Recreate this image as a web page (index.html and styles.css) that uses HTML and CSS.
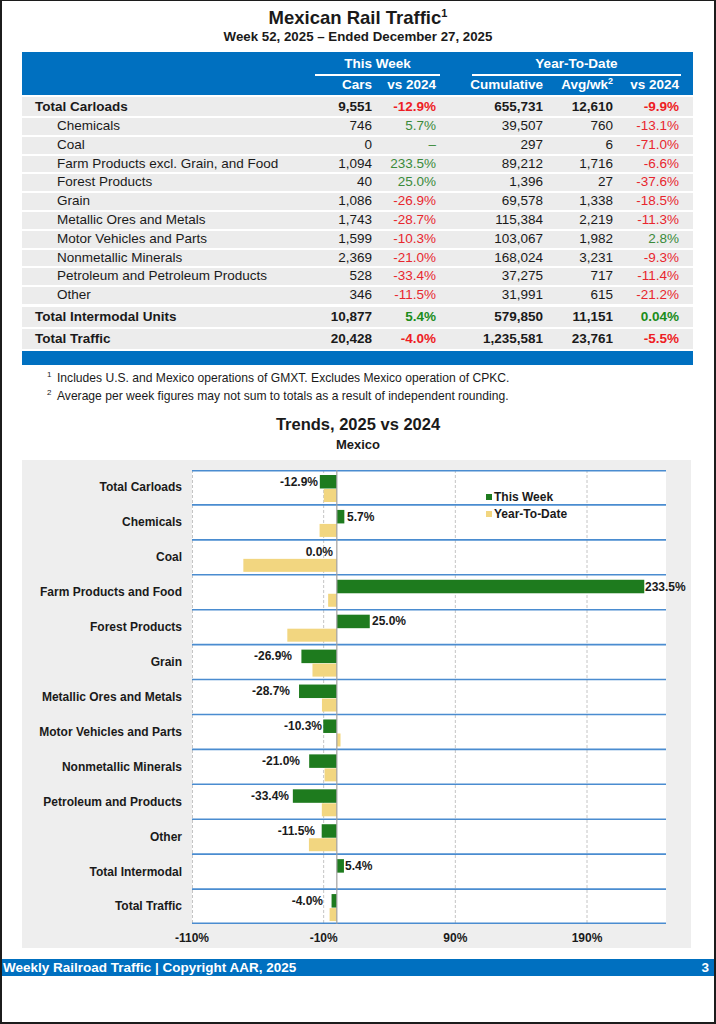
FILE: index.html
```html
<!DOCTYPE html>
<html>
<head>
<meta charset="utf-8">
<link rel="stylesheet" href="styles.css">
</head>
<body>
<div class="page">
  <h1 class="title">Mexican Rail Traffic<sup>1</sup></h1>
  <div class="subtitle">Week 52, 2025 – Ended December 27, 2025</div>

  <div class="table">
    <div class="thead">
      <div class="hrow1">
        <div></div>
        <div class="group">This Week</div>
        <div></div>
        <div class="group">Year-To-Date</div>
        <div></div>
      </div>
      <div class="hrow2 cols">
        <div></div>
        <div class="num">Cars</div>
        <div class="num">vs 2024</div>
        <div class="num">Cumulative</div>
        <div class="num">Avg/wk<sup>2</sup></div>
        <div class="num">vs 2024</div>
        <div></div>
      </div>
    </div>
    <div class="tbody">
      <div class="row cols total first">
        <div class="lbl">Total Carloads</div><div class="num">9,551</div><div class="num neg">-12.9%</div><div class="num">655,731</div><div class="num">12,610</div><div class="num neg">-9.9%</div><div></div>
      </div>
      <div class="row cols sub">
        <div class="lbl">Chemicals</div><div class="num">746</div><div class="num pos">5.7%</div><div class="num">39,507</div><div class="num">760</div><div class="num neg">-13.1%</div><div></div>
      </div>
      <div class="row cols sub">
        <div class="lbl">Coal</div><div class="num">0</div><div class="num pos">–</div><div class="num">297</div><div class="num">6</div><div class="num neg">-71.0%</div><div></div>
      </div>
      <div class="row cols sub">
        <div class="lbl">Farm Products excl. Grain, and Food</div><div class="num">1,094</div><div class="num pos">233.5%</div><div class="num">89,212</div><div class="num">1,716</div><div class="num neg">-6.6%</div><div></div>
      </div>
      <div class="row cols sub">
        <div class="lbl">Forest Products</div><div class="num">40</div><div class="num pos">25.0%</div><div class="num">1,396</div><div class="num">27</div><div class="num neg">-37.6%</div><div></div>
      </div>
      <div class="row cols sub">
        <div class="lbl">Grain</div><div class="num">1,086</div><div class="num neg">-26.9%</div><div class="num">69,578</div><div class="num">1,338</div><div class="num neg">-18.5%</div><div></div>
      </div>
      <div class="row cols sub">
        <div class="lbl">Metallic Ores and Metals</div><div class="num">1,743</div><div class="num neg">-28.7%</div><div class="num">115,384</div><div class="num">2,219</div><div class="num neg">-11.3%</div><div></div>
      </div>
      <div class="row cols sub">
        <div class="lbl">Motor Vehicles and Parts</div><div class="num">1,599</div><div class="num neg">-10.3%</div><div class="num">103,067</div><div class="num">1,982</div><div class="num pos">2.8%</div><div></div>
      </div>
      <div class="row cols sub">
        <div class="lbl">Nonmetallic Minerals</div><div class="num">2,369</div><div class="num neg">-21.0%</div><div class="num">168,024</div><div class="num">3,231</div><div class="num neg">-9.3%</div><div></div>
      </div>
      <div class="row cols sub">
        <div class="lbl">Petroleum and Petroleum Products</div><div class="num">528</div><div class="num neg">-33.4%</div><div class="num">37,275</div><div class="num">717</div><div class="num neg">-11.4%</div><div></div>
      </div>
      <div class="row cols sub">
        <div class="lbl">Other</div><div class="num">346</div><div class="num neg">-11.5%</div><div class="num">31,991</div><div class="num">615</div><div class="num neg">-21.2%</div><div></div>
      </div>
      <div class="row cols total inter">
        <div class="lbl">Total Intermodal Units</div><div class="num">10,877</div><div class="num pos">5.4%</div><div class="num">579,850</div><div class="num">11,151</div><div class="num pos">0.04%</div><div></div>
      </div>
      <div class="row cols total traffic">
        <div class="lbl">Total Traffic</div><div class="num">20,428</div><div class="num neg">-4.0%</div><div class="num">1,235,581</div><div class="num">23,761</div><div class="num neg">-5.5%</div><div></div>
      </div>
    </div>
    <div class="tfoot"></div>
  </div>

  <div class="notes">
    <div class="note"><sup>1</sup>Includes U.S. and Mexico operations of GMXT. Excludes Mexico operation of CPKC.</div>
    <div class="note"><sup>2</sup>Average per week figures may not sum to totals as a result of independent rounding.</div>
  </div>

  <h2 class="chart-title">Trends, 2025 vs 2024</h2>
  <div class="chart-sub">Mexico</div>

  <div class="chart">
    <div class="cats">
      <div class="cat">Total Carloads</div>
      <div class="cat">Chemicals</div>
      <div class="cat">Coal</div>
      <div class="cat">Farm Products and Food</div>
      <div class="cat">Forest Products</div>
      <div class="cat">Grain</div>
      <div class="cat">Metallic Ores and Metals</div>
      <div class="cat">Motor Vehicles and Parts</div>
      <div class="cat">Nonmetallic Minerals</div>
      <div class="cat">Petroleum and Products</div>
      <div class="cat">Other</div>
      <div class="cat">Total Intermodal</div>
      <div class="cat">Total Traffic</div>
    </div>
    <svg class="plot" width="499" height="478" viewBox="0 0 499 478">
      <rect x="0" y="0" width="474" height="454" fill="#ffffff"/>
      <g stroke="#c4c4c4" stroke-width="1" stroke-dasharray="3 2">
        <line x1="0.5" y1="0" x2="0.5" y2="454"/>
        <line x1="131.67" y1="0" x2="131.67" y2="454"/>
        <line x1="263.33" y1="0" x2="263.33" y2="454"/>
        <line x1="395" y1="0" x2="395" y2="454"/>
      </g>
      <g stroke="#4a8cd0" stroke-width="1.6">
        <line x1="0" y1="0.8" x2="474" y2="0.8"/>
        <line x1="0" y1="34.92" x2="474" y2="34.92"/>
        <line x1="0" y1="69.85" x2="474" y2="69.85"/>
        <line x1="0" y1="104.77" x2="474" y2="104.77"/>
        <line x1="0" y1="139.69" x2="474" y2="139.69"/>
        <line x1="0" y1="174.62" x2="474" y2="174.62"/>
        <line x1="0" y1="209.54" x2="474" y2="209.54"/>
        <line x1="0" y1="244.46" x2="474" y2="244.46"/>
        <line x1="0" y1="279.38" x2="474" y2="279.38"/>
        <line x1="0" y1="314.31" x2="474" y2="314.31"/>
        <line x1="0" y1="349.23" x2="474" y2="349.23"/>
        <line x1="0" y1="384.15" x2="474" y2="384.15"/>
        <line x1="0" y1="419.08" x2="474" y2="419.08"/>
        <line x1="0" y1="453.2" x2="474" y2="453.2"/>
      </g>
      <g fill="#1e7b1e">
        <rect x="127.84" y="5" width="16.99" height="13.5"/>
        <rect x="144.83" y="39.92" width="7.51" height="13.5"/>
        <rect x="144.83" y="109.77" width="307.44" height="13.5"/>
        <rect x="144.83" y="144.69" width="32.92" height="13.5"/>
        <rect x="109.41" y="179.62" width="35.42" height="13.5"/>
        <rect x="107.04" y="214.54" width="37.79" height="13.5"/>
        <rect x="131.27" y="249.46" width="13.56" height="13.5"/>
        <rect x="117.18" y="284.38" width="27.65" height="13.5"/>
        <rect x="100.85" y="319.31" width="43.98" height="13.5"/>
        <rect x="129.69" y="354.23" width="15.14" height="13.5"/>
        <rect x="144.83" y="389.15" width="7.11" height="13.5"/>
        <rect x="139.56" y="424.08" width="5.27" height="13.5"/>
      </g>
      <g fill="#f2d680">
        <rect x="131.79" y="19" width="13.04" height="13"/>
        <rect x="127.58" y="53.92" width="17.25" height="13"/>
        <rect x="51.35" y="88.85" width="93.48" height="13"/>
        <rect x="136.14" y="123.77" width="8.69" height="13"/>
        <rect x="95.32" y="158.69" width="49.51" height="13"/>
        <rect x="120.47" y="193.62" width="24.36" height="13"/>
        <rect x="129.95" y="228.54" width="14.88" height="13"/>
        <rect x="144.83" y="263.46" width="3.69" height="13"/>
        <rect x="132.58" y="298.38" width="12.25" height="13"/>
        <rect x="129.82" y="333.31" width="15.01" height="13"/>
        <rect x="116.92" y="368.23" width="27.91" height="13"/>
        <rect x="137.59" y="438.08" width="7.24" height="13"/>
      </g>
      <line x1="144.83" y1="0" x2="144.83" y2="454" stroke="#a0a0a0" stroke-width="1.2"/>
      <g class="vlbl">
        <text x="126" y="11.75" text-anchor="end">-12.9%</text>
        <text x="155" y="46.67">5.7%</text>
        <text x="141" y="81.6" text-anchor="end">0.0%</text>
        <text x="453" y="116.52">233.5%</text>
        <text x="180" y="151.44">25.0%</text>
        <text x="100" y="186.37" text-anchor="end">-26.9%</text>
        <text x="98" y="221.29" text-anchor="end">-28.7%</text>
        <text x="130" y="256.21" text-anchor="end">-10.3%</text>
        <text x="108" y="291.13" text-anchor="end">-21.0%</text>
        <text x="97" y="326.06" text-anchor="end">-33.4%</text>
        <text x="123" y="360.98" text-anchor="end">-11.5%</text>
        <text x="153" y="395.9">5.4%</text>
        <text x="131" y="430.83" text-anchor="end">-4.0%</text>
      </g>
      <rect x="294" y="24" width="6" height="6" fill="#1e7b1e"/>
      <rect x="294" y="41" width="6" height="6" fill="#f2d680"/>
      <g class="vlbl">
        <text x="302" y="27">This Week</text>
        <text x="302" y="44">Year-To-Date</text>
      </g>
      <g class="vlbl" text-anchor="middle">
        <text x="0" y="468">-110%</text>
        <text x="131.67" y="468">-10%</text>
        <text x="263.33" y="468">90%</text>
        <text x="395" y="468">190%</text>
      </g>
    </svg>
  </div>

  <div class="footer">
    <span>Weekly Railroad Traffic | Copyright AAR, 2025</span>
    <span>3</span>
  </div>
</div>
</body>
</html>
```
FILE: styles.css
```css
* { box-sizing: border-box; }
html, body { margin: 0; padding: 0; background: #ffffff; }
body {
  font-family: "Liberation Sans", Arial, sans-serif;
  color: #1a1a1a;
}
.page {
  width: 716px;
  height: 1024px;
  border: 2px solid #1c1c1c;
  border-top-width: 1px;
  display: flex;
  flex-direction: column;
  overflow: hidden;
}
.title {
  margin: 6px 0 0;
  font-size: 18.5px;
  line-height: 22px;
  font-weight: bold;
  text-align: center;
}
.title sup {
  font-size: 11px;
  line-height: 0;
  vertical-align: 7px;
}
.subtitle {
  font-size: 13.3px;
  line-height: 16px;
  font-weight: bold;
  text-align: center;
}
.table {
  margin: 7px 0 0 20px;
  width: 671px;
}
.thead {
  background: #0070c0;
  color: #ffffff;
  font-weight: bold;
  font-size: 13.5px;
}
.hrow1 {
  display: grid;
  grid-template-columns: 293px 125px 32px 209px 12px;
  height: 22px;
}
.group {
  text-align: center;
  line-height: 21px;
  padding-top: 1px;
  border-bottom: 2px solid #ffffff;
}
.cols {
  display: grid;
  grid-template-columns: 290px 60px 64px 107px 70px 66px 14px;
}
.hrow2 {
  height: 21px;
  line-height: 21px;
}
.hrow2 sup {
  font-size: 9px;
  line-height: 0;
  vertical-align: 5px;
}
.num { text-align: right; white-space: nowrap; }
.row {
  background: #ececec;
  font-size: 13.5px;
  margin-top: 2px;
}
.row.sub { height: 16.8px; line-height: 16.8px; }
.row.sub .lbl { padding-left: 35px; }
.row.total { font-weight: bold; }
.row.total .lbl { padding-left: 13px; }
.row.first { height: 19px; line-height: 19px; }
.row.inter { margin-top: 3px; height: 20px; line-height: 20px; }
.row.traffic { height: 20px; line-height: 20px; }
.lbl { white-space: nowrap; }
.neg { color: #e8262e; }
.pos { color: #3a8a3a; }
.row.total .neg { color: #ee1c24; }
.row.total .pos { color: #1a8c1a; }
.tfoot {
  margin-top: 2px;
  height: 14px;
  background: #0070c0;
}
.notes {
  margin-top: 4px;
  padding-left: 45px;
  font-size: 12.1px;
}
.note {
  line-height: 18px;
}
.note sup {
  display: inline-block;
  width: 10px;
  font-size: 8px;
  line-height: 0;
  vertical-align: 5px;
}
.chart-title {
  margin: 9px 0 0;
  font-size: 16.5px;
  line-height: 20px;
  font-weight: bold;
  text-align: center;
}
.chart-sub {
  margin-top: 3px;
  font-size: 13px;
  line-height: 16px;
  font-weight: bold;
  text-align: center;
}
.chart {
  margin: 7px 0 0 20px;
  width: 669px;
  height: 488px;
  background: #eeeeee;
  padding-top: 10px;
  display: flex;
}
.cats {
  width: 170px;
  display: flex;
  flex-direction: column;
}
.cat {
  height: 34.923px;
  display: flex;
  align-items: center;
  justify-content: flex-end;
  padding-right: 10px;
  font-size: 12px;
  font-weight: bold;
  white-space: nowrap;
}
.plot {
  display: block;
  overflow: visible;
}
.vlbl text {
  font-family: "Liberation Sans", Arial, sans-serif;
  font-size: 12px;
  font-weight: bold;
  fill: #1a1a1a;
  dominant-baseline: central;
}
.footer {
  margin-top: 11px;
  height: 17px;
  background: #0070c0;
  color: #ffffff;
  font-weight: bold;
  font-size: 13.5px;
  line-height: 17px;
  display: flex;
  justify-content: space-between;
  padding: 0 5px 0 1px;
}
```
